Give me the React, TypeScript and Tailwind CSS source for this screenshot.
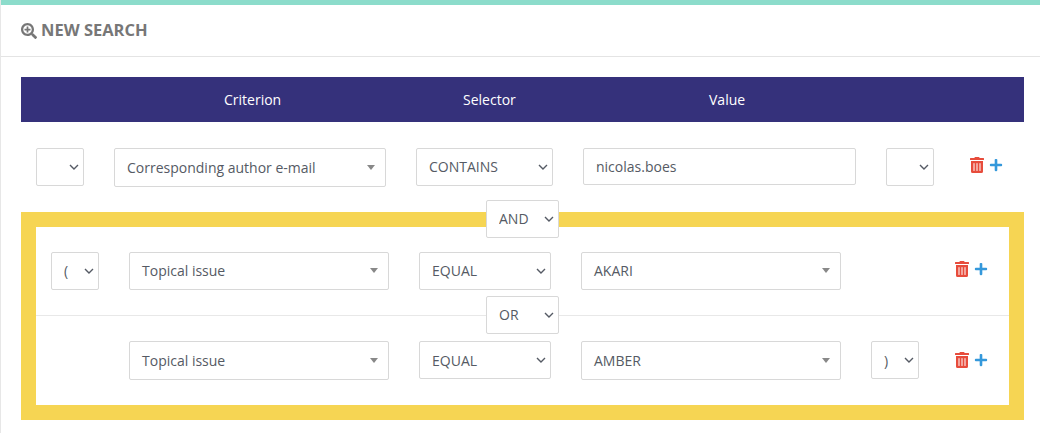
import { FaPlus, FaSearchPlus, FaTrashAlt } from "react-icons/fa";

function Sel({ value, w, low = false }: { value: string; w: string; low?: boolean }) {
  return (
    <div className={`${w} relative h-[38px] shrink-0`}>
      <select
        defaultValue={value}
        className={`${low ? "pt-[1px]" : "pb-[1px]"} h-full w-full appearance-none rounded-[2px] border border-[#d8d8d8] bg-white pl-[12px] text-[14px] leading-[20px] text-[#555a64] outline-none`}
      >
        <option value={value}>{value}</option>
      </select>
      <svg viewBox="0 0 10 6" className="pointer-events-none absolute right-[5px] top-[16px] h-[6px] w-[10px]" fill="none" stroke="#555a64" strokeWidth="1.4">
        <path d="M1 1l4 4 4-4" />
      </svg>
    </div>
  );
}

function Combo({ value, w, h = "h-[38px] pb-[1px]" }: { value: string; w: string; h?: string }) {
  return (
    <div className={`${w} ${h} flex shrink-0 items-center justify-between rounded-[2px] border border-[#d8d8d8] bg-white pl-[12px] pr-[10px] text-[14px] text-[#555a64]`}>
      <span>{value}</span>
      <span className="h-0 w-0 border-x-[4px] border-t-[5px] border-x-transparent border-t-[#888888]" />
    </div>
  );
}

function Actions({ pt = "pt-[9px]" }: { pt?: string }) {
  return (
    <div className={`${pt} flex shrink-0 items-center gap-[5px] pl-[6px]`}>
      <FaTrashAlt className="h-[16px] w-[14px] text-[#e74c3c]" />
      <FaPlus className="h-[14px] w-[14px] text-[#3498db]" />
    </div>
  );
}

export default function App() {
  return (
    <div className="h-[433px] w-[1040px] overflow-hidden border-l border-[#e7e7e7] bg-white font-['Open_Sans',sans-serif]">
      <div className="h-[5px] bg-[#8cdccb]" />
      <div className="flex h-[52px] items-center gap-[4px] border-b border-[#e4e4e4] pl-[20px]">
        <FaSearchPlus className="h-[16px] w-[16px] text-[#777777]" />
        <span className="text-[16.5px] font-bold text-[#777777]">NEW SEARCH</span>
      </div>
      <div className="px-[20px] pt-[20px]">
        <div className="flex h-[45px] w-[1003px] items-center bg-[#35317b] pl-[203px] text-[14px] text-white">
          <span className="w-[239px]">Criterion</span>
          <span className="w-[246px]">Selector</span>
          <span>Value</span>
        </div>
        <div className="flex h-[90px] items-start gap-[30px] pl-[15px] pt-[26px]">
          <Sel value="" w="w-[48px]" />
          <Combo value="Corresponding author e-mail" w="w-[272px]" h="h-[39px]" />
          <Sel value="CONTAINS" w="w-[137px]" />
          <div className="flex h-[37px] w-[273px] shrink-0 items-center rounded-[2px] border border-[#d8d8d8] pb-[1px] pl-[12px] text-[14px] text-[#555a64]">nicolas.boes</div>
          <Sel value="" w="w-[48px]" />
          <Actions />
        </div>
        <div className="relative h-[208px] w-[1003px] border-[15px] border-[#f6d553]">
          <div className="absolute left-[450px] top-[-27px]"><Sel value="AND" w="w-[73px]" /></div>
          <div className="flex h-[89px] items-start gap-[30px] border-b border-[#e8e8e8] pl-[15px] pt-[25px]">
            <Sel value="(" w="w-[48px]" />
            <Combo value="Topical issue" w="w-[260px]" />
            <Sel value="EQUAL" w="w-[132px]" />
            <Combo value="AKARI" w="w-[260px]" />
            <div className="w-[48px] shrink-0" />
            <Actions />
          </div>
          <div className="absolute left-[450px] top-[69px]"><Sel value="OR" w="w-[73px]" /></div>
          <div className="flex items-start gap-[30px] pl-[15px] pt-[25px]">
            <div className="w-[48px] shrink-0" />
            <Combo value="Topical issue" w="w-[260px]" h="h-[39px]" />
            <Sel value="EQUAL" w="w-[132px]" low />
            <Combo value="AMBER" w="w-[260px]" h="h-[39px]" />
            <Sel value=")" w="w-[48px]" low />
            <Actions pt="pt-[11px]" />
          </div>
        </div>
      </div>
    </div>
  );
}
